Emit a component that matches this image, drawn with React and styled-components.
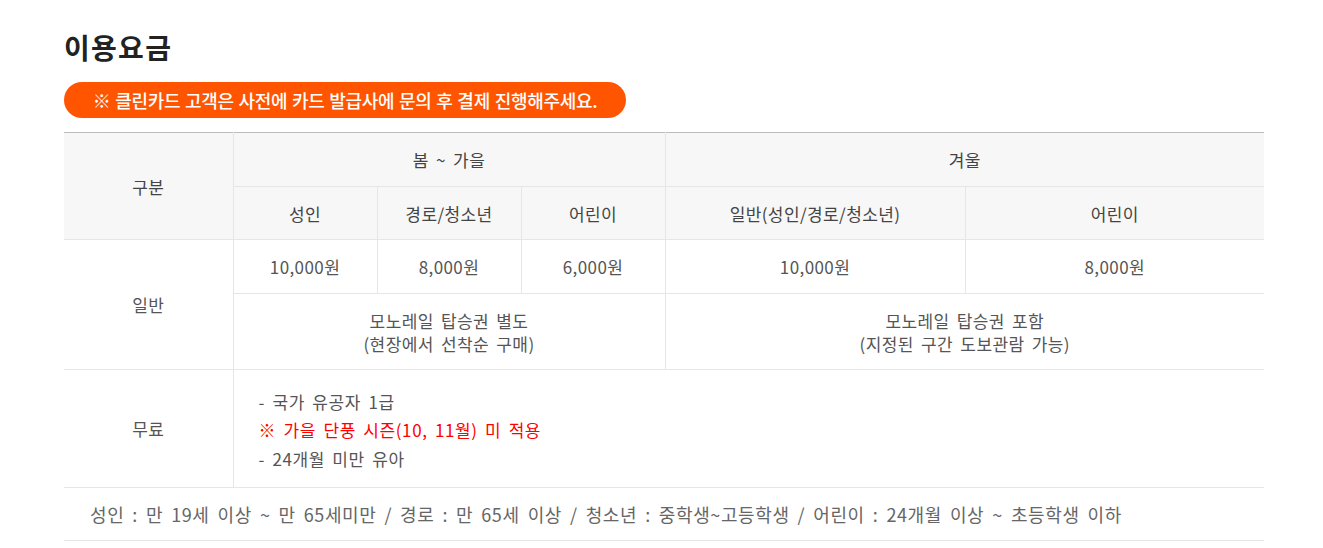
import React from 'react'
import styled, { createGlobalStyle } from 'styled-components'

const GlobalStyle = createGlobalStyle`
  body {
    margin: 0;
    background: #fff;
    font-family: "Noto Sans CJK KR", "Noto Sans", sans-serif;
    color: #555;
  }
`

const Wrap = styled.div`
  padding: 29px 59px 0 64px;
`

const Title = styled.h2`
  margin: 0;
  font-size: 28px;
  font-weight: 700;
  line-height: 36px;
  color: #222;
  letter-spacing: 1.3px;
`

const Notice = styled.div`
  display: inline-flex;
  align-items: center;
  justify-content: center;
  margin-top: 17px;
  width: 562px;
  height: 36px;
  border-radius: 18px;
  background: #ff5500;
  color: #fff;
  font-size: 18px;
  font-weight: 500;
  letter-spacing: -0.3px;
  word-spacing: 1px;
`

const Table = styled.table`
  margin-top: 14px;
  width: 1200px;
  border-collapse: collapse;
  table-layout: fixed;
  border-top: 1px solid #bdbdbd;
  font-size: 17px;
  color: #555;
  letter-spacing: 0.4px;
  word-spacing: 3px;
`

const Cell = styled.td`
  border: 1px solid #e6e6e6;
  border-top: 0;
  text-align: center;
  vertical-align: middle;
  height: ${({ h }) => h}px;
  padding: 0;
  line-height: 23px;
  font-weight: 400;
  color: ${({ head }) => (head ? '#444' : '#555')};
  background: ${({ head }) => (head ? '#f7f7f7' : '#fff')};
  &:first-child {
    border-left: 0;
  }
  &:last-child {
    border-right: 0;
  }
`

const List = styled.ul`
  list-style: none;
  margin: 0;
  padding: 4px 0 0 25px;
  text-align: left;
  line-height: 28.5px;
  letter-spacing: 0.6px;
`

const Item = styled.li`
  color: ${({ red }) => (red ? '#ff0000' : '#555')};
`

const Note = styled.td`
  border-bottom: 1px solid #e6e6e6;
  height: 51px;
  padding: 0 0 1px 26px;
  font-size: 18px;
  color: #666;
  letter-spacing: 0.6px;
  word-spacing: 3.4px;
`

export default function App() {
  return (
    <Wrap>
      <GlobalStyle />
      <Title>이용요금</Title>
      <Notice>※ 클린카드 고객은 사전에 카드 발급사에 문의 후 결제 진행해주세요.</Notice>
      <Table>
        <colgroup>
          <col style={{ width: 169 }} />
          <col style={{ width: 144 }} />
          <col style={{ width: 144 }} />
          <col style={{ width: 144 }} />
          <col style={{ width: 300 }} />
          <col style={{ width: 299 }} />
        </colgroup>
        <tbody>
          <tr>
            <Cell as="th" head rowSpan={2} h={53}>구분</Cell>
            <Cell as="th" head colSpan={3} h={53}>봄 ~ 가을</Cell>
            <Cell as="th" head colSpan={2} h={53}>겨울</Cell>
          </tr>
          <tr>
            <Cell as="th" head h={52}>성인</Cell>
            <Cell as="th" head h={52}>경로/청소년</Cell>
            <Cell as="th" head h={52}>어린이</Cell>
            <Cell as="th" head h={52}>일반(성인/경로/청소년)</Cell>
            <Cell as="th" head h={52}>어린이</Cell>
          </tr>
          <tr>
            <Cell rowSpan={2} h={53}>일반</Cell>
            <Cell h={53}>10,000원</Cell>
            <Cell h={53}>8,000원</Cell>
            <Cell h={53}>6,000원</Cell>
            <Cell h={53}>10,000원</Cell>
            <Cell h={53}>8,000원</Cell>
          </tr>
          <tr>
            <Cell colSpan={3} h={75}>
              모노레일 탑승권 별도
              <br />
              (현장에서 선착순 구매)
            </Cell>
            <Cell colSpan={2} h={75}>
              모노레일 탑승권 포함
              <br />
              (지정된 구간 도보관람 가능)
            </Cell>
          </tr>
          <tr>
            <Cell h={117}>무료</Cell>
            <Cell colSpan={5} h={117} style={{ borderRight: 0 }}>
              <List>
                <Item>- 국가 유공자 1급</Item>
                <Item red>※ 가을 단풍 시즌(10, 11월) 미 적용</Item>
                <Item>- 24개월 미만 유아</Item>
              </List>
            </Cell>
          </tr>
          <tr>
            <Note colSpan={6}>
              성인 : 만 19세 이상 ~ 만 65세미만 / 경로 : 만 65세 이상 / 청소년 : 중학생~고등학생 / 어린이 : 24개월 이상 ~ 초등학생 이하
            </Note>
          </tr>
        </tbody>
      </Table>
    </Wrap>
  )
}
